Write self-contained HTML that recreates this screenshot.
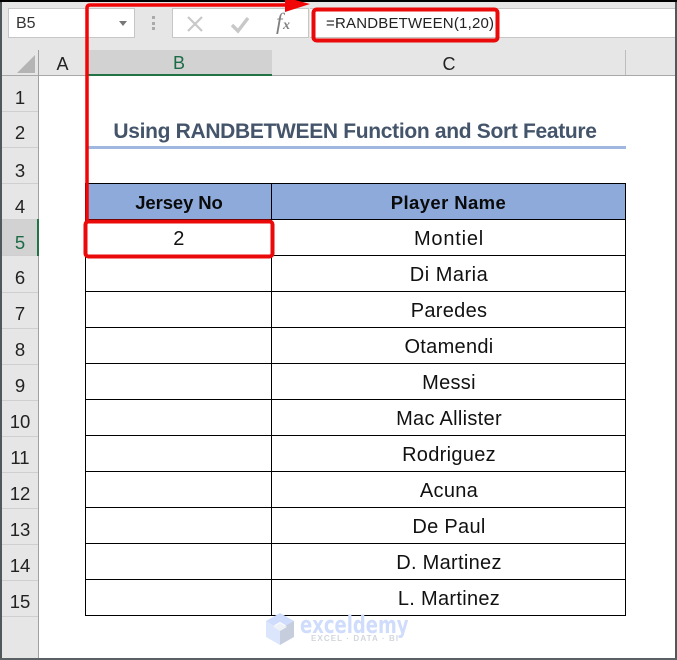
<!DOCTYPE html>
<html><head><meta charset="utf-8"><style>
html,body{margin:0;padding:0}
body{width:677px;height:660px;position:relative;overflow:hidden;background:#fff;font-family:"Liberation Sans",sans-serif;color:#000}
div{position:absolute;box-sizing:border-box}
.rh{left:2px;width:36px;height:36px;background:#e6e6e6;border-bottom:1px solid #cfcfcf;text-align:center;font-size:18.5px;line-height:43px;color:#222}
.hl{left:85px;width:541px;height:1px;background:#000}
.t{left:272px;width:354px;height:36px;text-align:center;font-size:20px;line-height:39px;color:#111;letter-spacing:.3px}
.h{font-weight:bold;font-size:18.5px;top:184px;line-height:37px;height:35px;text-align:center;color:#0a0a0a}
.ch{top:52px;height:23px;text-align:center;font-size:18px;line-height:24px;color:#222}
</style></head><body>
<div style="left:0;top:0;width:677px;height:660px;background:#fff"></div>
<!-- ribbon -->
<div style="left:2px;top:2px;width:673px;height:74px;background:#e6e6e6"></div>
<div style="left:8px;top:8px;width:127px;height:30px;background:#fff;border:1px solid #c6c6c6;font-size:16px;line-height:29px;padding-left:7px;color:#333">B5</div>
<div style="left:119px;top:21px;width:0;height:0;border-left:4px solid transparent;border-right:4px solid transparent;border-top:5px solid #777"></div>
<div style="left:152px;top:16px;width:3px;height:3px;background:#aaa"></div>
<div style="left:152px;top:22px;width:3px;height:3px;background:#aaa"></div>
<div style="left:152px;top:27px;width:3px;height:3px;background:#aaa"></div>
<div style="left:172px;top:8px;width:137px;height:30px;background:#fff;border:1px solid #c6c6c6"></div>
<svg style="position:absolute;left:172px;top:8px" width="137" height="30" fill="none">
<path d="M16 9L30 23M30 9L16 23" stroke="#c8c8c8" stroke-width="2.2"/>
<path d="M60 17L66 23L76 10" stroke="#c8c8c8" stroke-width="3.4"/>
</svg>
<svg style="position:absolute;left:272px;top:8px" width="30" height="30"><text x="4" y="21" font-family="Liberation Serif,serif" font-style="italic" font-size="23" fill="#808080">f</text><text x="11" y="21" font-family="Liberation Serif,serif" font-style="italic" font-weight="bold" font-size="14" fill="#808080">x</text></svg>
<div style="left:310px;top:8px;width:365px;height:30px;background:#fff;border-top:1px solid #c6c6c6;border-bottom:1px solid #c6c6c6"></div>
<div style="left:326px;top:8px;font-size:15px;line-height:31px;color:#222;white-space:nowrap;letter-spacing:.2px">=RANDBETWEEN(1,20)</div>
<!-- column headers -->
<div style="left:2px;top:75px;width:673px;height:1px;background:#a8a8a8"></div>
<div style="left:38px;top:50px;width:1px;height:610px;background:#a0a0a0"></div>
<div style="left:17px;top:55px;width:0;height:0;border-left:18px solid transparent;border-bottom:18px solid #b4b4b4"></div>
<div class="ch" style="left:39px;width:47px">A</div>
<div class="ch" style="left:86px;top:50px;width:186px;height:24px;background:#d2d2d2;line-height:27px;color:#1c6b47">B</div>
<div style="left:86px;top:74px;width:186px;height:2px;background:#217346"></div>
<div class="ch" style="left:272px;width:354px">C</div>
<div style="left:625px;top:50px;width:1px;height:25px;background:#bdbdbd"></div>
<!-- row headers -->
<div class="rh" style="top:76px">1</div>
<div class="rh" style="top:112px;line-height:41px">2</div>
<div class="rh" style="top:148px;line-height:45px">3</div>
<div class="rh" style="top:184px;line-height:45px">4</div>
<div class="rh" style="top:220px;background:#d2d2d2;color:#1c6b47;line-height:45px">5</div>
<div style="left:37px;top:219px;width:2px;height:37px;background:#217346"></div>
<div class="rh" style="top:256px;height:37px">6</div>
<div class="rh" style="top:293px;line-height:42px">7</div>
<div class="rh" style="top:329px;line-height:42px">8</div>
<div class="rh" style="top:365px;line-height:42px">9</div>
<div class="rh" style="top:401px;line-height:42px">10</div>
<div class="rh" style="top:437px;line-height:42px">11</div>
<div class="rh" style="top:473px;line-height:42px">12</div>
<div class="rh" style="top:509px;line-height:42px">13</div>
<div class="rh" style="top:545px;line-height:42px">14</div>
<div class="rh" style="top:581px;line-height:42px">15</div>
<div style="left:2px;top:617px;width:36px;height:43px;background:#e6e6e6"></div>
<!-- title -->
<div style="left:86px;top:117px;width:538px;text-align:center;font-size:21px;font-weight:bold;line-height:30px;color:#44546a;white-space:nowrap;letter-spacing:-.32px">Using RANDBETWEEN Function and Sort Feature</div>
<div style="left:88px;top:146px;width:538px;height:3px;background:#a0b8e0"></div>
<!-- table -->
<div style="left:86px;top:184px;width:540px;height:36px;background:#8eaadb"></div>
<div class="hl" style="top:183px"></div>
<div class="hl" style="top:219px"></div>
<div class="hl" style="top:255px"></div>
<div class="hl" style="top:291px"></div>
<div class="hl" style="top:327px"></div>
<div class="hl" style="top:363px"></div>
<div class="hl" style="top:399px"></div>
<div class="hl" style="top:435px"></div>
<div class="hl" style="top:471px"></div>
<div class="hl" style="top:507px"></div>
<div class="hl" style="top:543px"></div>
<div class="hl" style="top:579px"></div>
<div class="hl" style="top:615px"></div>
<div style="left:85px;top:183px;width:1px;height:433px;background:#000"></div>
<div style="left:271px;top:183px;width:1px;height:433px;background:#000"></div>
<div style="left:625px;top:183px;width:1px;height:433px;background:#000"></div>
<div class="h" style="left:87px;width:184px;letter-spacing:-.1px">Jersey No</div>
<div class="h" style="left:272px;width:353px;letter-spacing:.4px">Player Name</div>
<div class="t" style="left:87px;width:184px;top:220px">2</div>
<div class="t" style="top:220px;letter-spacing:.8px">Montiel</div>
<div class="t" style="top:256px;letter-spacing:.5px">Di Maria</div>
<div class="t" style="top:292px">Paredes</div>
<div class="t" style="top:328px">Otamendi</div>
<div class="t" style="top:364px">Messi</div>
<div class="t" style="top:400px">Mac Allister</div>
<div class="t" style="top:436px">Rodriguez</div>
<div class="t" style="top:472px">Acuna</div>
<div class="t" style="top:508px">De Paul</div>
<div class="t" style="top:544px">D. Martinez</div>
<div class="t" style="top:580px">L. Martinez</div>
<!-- watermark -->
<svg style="position:absolute;left:266px;top:612px" width="30" height="34">
<path d="M14 1L28 9V18L14 10L0 18V9Z" fill="#cfdcfb"/><path d="M0 9L14 17V33L0 25Z" fill="#dbe5fb"/><path d="M28 9L14 17V33L28 25Z" fill="#c6cedd"/><path d="M14 11L21 15L14 19L7 15Z" fill="#eef1f6"/>
</svg>
<div style="left:300px;top:610px;font-size:24px;font-weight:bold;line-height:30px;color:#cfdcfb;white-space:nowrap;font-family:'DejaVu Sans',sans-serif;transform-origin:0 0;transform:scaleX(.75)">exceldemy</div>
<div style="left:311px;top:633px;font-size:8px;line-height:12px;color:#d2d6dc;white-space:nowrap;letter-spacing:1.1px;font-weight:bold">EXCEL · DATA · BI</div>
<!-- frame -->
<div style="left:0;top:0;width:2px;height:660px;background:#50585c"></div>
<div style="left:675px;top:0;width:2px;height:660px;background:#50585c"></div>
<div style="left:0;top:658px;width:677px;height:2px;background:#5a6064"></div>
<div style="left:0;top:0;width:677px;height:2px;background:#000"></div>
<!-- red annotations -->
<svg style="position:absolute;left:0;top:0" width="677" height="660" fill="none">
<path d="M87 223V8Q87 5 90 5H292" stroke="#f00606" stroke-width="3.5"/>
<path d="M285 0H295L310 4L285 12Z" fill="#f00606"/>
<rect x="313.5" y="9.5" width="184" height="31" rx="3" stroke="#ea0a0a" stroke-width="4"/>
<rect x="85.5" y="221.5" width="187" height="35" rx="3" stroke="#ea0a0a" stroke-width="4"/>
</svg>
</body></html>
